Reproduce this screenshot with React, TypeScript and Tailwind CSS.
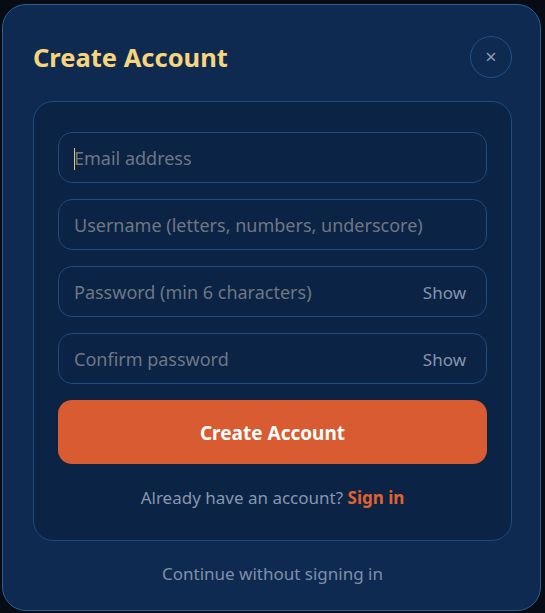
import React from "react";

const font = { fontFamily: '"Noto Sans", "Open Sans", sans-serif' };

function Field({ placeholder, show, focused }: { placeholder: string; show?: boolean; focused?: boolean }) {
  return (
    <div className="flex h-[51px] items-center rounded-[14px] border border-[#1f4b7f] bg-[#0b2344] pl-[15px] pr-[20px] pt-[2px]">
      {focused && <span className="mr-[-1px] h-[22px] w-[1px] bg-[#f5c542]" />}
      <span className="flex-1 text-[18px] text-[#6f7784]">{placeholder}</span>
      {show && <span className="text-[17px] text-[#8595ad]">Show</span>}
    </div>
  );
}

export default function App() {
  return (
    <div className="h-[613px] w-[545px] bg-[#060b14] pl-[2px] pt-[4px]" style={font}>
      <div className="flex h-[607px] w-[539px] flex-col rounded-[24px] border border-[#2a5f9a] bg-[#0e2a50] pl-[30px] pr-[28px]">
        <div className="flex items-center justify-between pt-[31px]">
          <h1 className="text-[25.5px] font-bold text-[#f8d57c]">Create Account</h1>
          <button className="flex h-[42px] w-[42px] items-center justify-center rounded-full border border-[#21508a] text-[20px] text-[#8a9ab3]">
            ×
          </button>
        </div>
        <div className="mt-[23px] flex flex-col rounded-[20px] border border-[#1f4b7f] bg-[#0b2344] px-[24px] pt-[30px] pb-[29px]">
          <div className="flex flex-col gap-[16px]">
            <Field placeholder="Email address" focused />
            <Field placeholder="Username (letters, numbers, underscore)" />
            <Field placeholder="Password (min 6 characters)" show />
            <Field placeholder="Confirm password" show />
          </div>
          <button className="mt-[16px] h-[64px] rounded-[14px] bg-[#d95b32] pt-[2px] text-[19px] font-bold text-white">
            Create Account
          </button>
          <p className="mt-[21px] text-center text-[17px] text-[#8797ae]">
            Already have an account? <span className="font-bold text-[#e2622f]">Sign in</span>
          </p>
        </div>
        <p className="mt-[20px] text-center text-[17px] text-[#7f8fa8]">Continue without signing in</p>
      </div>
    </div>
  );
}
